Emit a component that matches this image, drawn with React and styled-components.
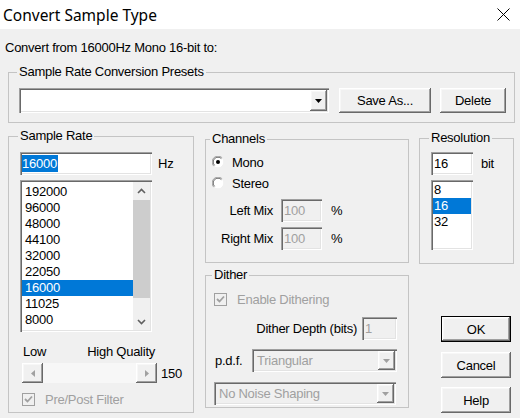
import styled, { createGlobalStyle } from "styled-components";

const GlobalStyle = createGlobalStyle`
  body {
    margin: 0;
    background: #f0f0f0;
  }
  * {
    box-sizing: border-box;
  }
`;

const sunken =
  "inset 1px 1px 0 #a0a0a0, inset 2px 2px 0 #696969, inset -1px -1px 0 #ffffff, inset -2px -2px 0 #e3e3e3";
const raised =
  "inset -1px -1px 0 #696969, inset 1px 1px 0 #ffffff, inset -2px -2px 0 #a0a0a0, inset 2px 2px 0 #f7f7f7";

const Window = styled.div`
  width: 520px;
  height: 418px;
  background: #f0f0f0;
  font-family: "Liberation Sans", Arial, sans-serif;
  font-size: 13px;
  letter-spacing: -0.25px;
  color: #000;
  overflow: hidden;
`;

const TitleBar = styled.div`
  height: 29px;
  background: #fff;
  display: flex;
  align-items: center;
  justify-content: space-between;
  padding: 0 10px 0 3px;
  font-family: "Noto Sans", "Open Sans", sans-serif;
  font-size: 15.5px;
  letter-spacing: 0;
`;

const Body = styled.div`
  padding: 12px 6px 0 8px;
`;

const Caption = styled.div`
  height: 14px;
  line-height: 14px;
  margin-left: -3px;
  margin-bottom: 10px;
`;

const Group = styled.fieldset`
  margin: 0;
  margin-top: ${(p) => p.$mt || 0}px;
  width: ${(p) => p.$w}px;
  height: ${(p) => p.$h}px;
  padding: ${(p) => p.$pad};
  border: 1px solid #c4c4c4;
  min-width: 0;
`;

const Legend = styled.legend`
  padding: 0 2px;
  margin-left: -2px;
  height: 14px;
  line-height: 14px;
`;

const Row = styled.div`
  display: flex;
  align-items: ${(p) => p.$align || "center"};
  justify-content: ${(p) => p.$justify || "flex-start"};
  margin-top: ${(p) => p.$mt || 0}px;
  margin-left: ${(p) => p.$ml || 0}px;
  height: ${(p) => (p.$h ? p.$h + "px" : "auto")};
  width: ${(p) => (p.$w ? p.$w + "px" : "auto")};
`;

const Column = styled.div`
  display: flex;
  flex-direction: column;
  margin-left: ${(p) => p.$ml || 0}px;
  margin-top: ${(p) => p.$mt || 0}px;
`;

const Field = styled.div`
  width: ${(p) => p.$w}px;
  height: 23px;
  margin-left: ${(p) => p.$ml || 0}px;
  background: ${(p) => (p.$disabled ? "#f0f0f0" : "#fff")};
  color: ${(p) => (p.$disabled ? "#a0a0a0" : "#000")};
  box-shadow: ${sunken};
  padding: 0 3px 0 ${(p) => p.$pl ?? 3}px;
  display: flex;
  align-items: center;
`;

const Selected = styled.span`
  background: #0078d7;
  color: #fff;
  line-height: 17px;
  padding: 0 1px 0 0;
`;

const Unit = styled.span`
  margin-left: ${(p) => p.$ml || 6}px;
`;

const Label = styled.span`
  width: ${(p) => (p.$w ? p.$w + "px" : "auto")};
  text-align: ${(p) => p.$align || "left"};
  color: ${(p) => (p.$disabled ? "#a0a0a0" : "#000")};
  margin-left: ${(p) => p.$ml || 0}px;
`;

const ListBox = styled.div`
  width: ${(p) => p.$w}px;
  height: ${(p) => p.$h}px;
  margin-top: ${(p) => p.$mt || 0}px;
  background: #fff;
  box-shadow: ${sunken};
  padding: 2px;
  display: flex;
  overflow: hidden;
`;

const Items = styled.div`
  flex: 1;
  overflow: hidden;
  padding-top: ${(p) => p.$pt || 0}px;
`;

const Item = styled.div`
  height: 16px;
  line-height: 16px;
  padding-left: ${(p) => p.$pl ?? 3}px;
  background: ${(p) => (p.$active ? "#0078d7" : "transparent")};
  color: ${(p) => (p.$active ? "#fff" : "#000")};
  white-space: nowrap;
`;

const VScroll = styled.div`
  width: 17px;
  display: flex;
  flex-direction: column;
  background: #f0f0f0;
`;

const ScrollArrow = styled.div`
  height: 17px;
  display: flex;
  align-items: center;
  justify-content: center;
  flex-shrink: 0;
`;

const Thumb = styled.div`
  height: 98px;
  margin: 1px 0 0;
  background: #cdcdcd;
  flex-shrink: 0;
`;

const ScrollTrack = styled.div`
  flex: 1;
`;

const Combo = styled.div`
  width: ${(p) => p.$w}px;
  height: ${(p) => p.$h || 23}px;
  margin-top: ${(p) => p.$mt || 0}px;
  background: ${(p) => (p.$disabled ? "#f0f0f0" : "#fff")};
  color: ${(p) => (p.$disabled ? "#a0a0a0" : "#000")};
  box-shadow: ${sunken};
  padding: 2px;
  display: flex;
`;

const ComboText = styled.div`
  flex: 1;
  padding-left: 3px;
  display: flex;
  align-items: center;
`;

const DropBtn = styled.div`
  width: 17px;
  background: #f0f0f0;
  box-shadow: ${raised};
  display: flex;
  align-items: center;
  justify-content: center;
`;

const Button = styled.button`
  width: ${(p) => p.$w}px;
  height: ${(p) => p.$h || 26}px;
  margin-left: ${(p) => p.$ml || 0}px;
  margin-top: ${(p) => p.$mt || 0}px;
  padding: 0;
  font: inherit;
  letter-spacing: inherit;
  color: #000;
  background: #f0f0f0;
  border: ${(p) => (p.$default ? "1px solid #000" : "none")};
  box-shadow: ${raised};
`;

const RadioRow = styled.div`
  height: 20px;
  display: flex;
  align-items: center;
  margin-top: ${(p) => p.$mt || 0}px;
  gap: 8px;
`;

const CheckRow = styled.div`
  height: 20px;
  display: flex;
  align-items: center;
  margin-top: ${(p) => p.$mt || 0}px;
  margin-left: ${(p) => p.$ml || 0}px;
  gap: 10px;
  color: #a0a0a0;
`;

const Track = styled.div`
  width: 135px;
  height: 20px;
  margin-left: 2px;
  display: flex;
  background: #f7f7f7;
`;

const TrackBtn = styled.div`
  width: 21px;
  background: #f0f0f0;
  box-shadow: ${raised};
  display: flex;
  align-items: center;
  justify-content: center;
`;

const TrackFill = styled.div`
  flex: 1;
`;

const MidColumn = styled.div`
  display: flex;
  flex-direction: column;
  margin-left: 11px;
`;

const Arrow = ({ dir = "down", color = "#000" }) => (
  <svg width="7" height="4" viewBox="0 0 7 4">
    {dir === "down" ? (
      <path d="M0 0 H7 L3.5 4 Z" fill={color} />
    ) : (
      <path d="M0 4 H7 L3.5 0 Z" fill={color} />
    )}
  </svg>
);

const Chevron = ({ up }) => (
  <svg width="9" height="6" viewBox="0 0 9 6">
    <path
      d={up ? "M1 5 L4.5 1.5 L8 5" : "M1 1 L4.5 4.5 L8 1"}
      fill="none"
      stroke="#606060"
      strokeWidth="1.6"
    />
  </svg>
);

const SideArrow = ({ left }) => (
  <svg width="4" height="7" viewBox="0 0 4 7">
    <path d={left ? "M4 0 V7 L0 3.5 Z" : "M0 0 V7 L4 3.5 Z"} fill="#a0a0a0" />
  </svg>
);

const CheckBox = () => (
  <svg width="13" height="13" viewBox="0 0 13 13">
    <rect x="0.5" y="0.5" width="12" height="12" fill="#f0f0f0" stroke="#a0a0a0" />
    <path d="M3 6 L5.5 8.5 L10 3.5" fill="none" stroke="#a0a0a0" strokeWidth="1.8" />
  </svg>
);

const Radio = ({ checked }) => (
  <svg width="12" height="12" viewBox="0 0 12 12">
    <circle cx="6" cy="6" r="5.5" fill="#fff" />
    <path d="M1.8 10.2 A5.5 5.5 0 0 1 10.2 1.8" fill="none" stroke="#a0a0a0" />
    <path d="M2.6 9.4 A4.5 4.5 0 0 1 9.4 2.6" fill="none" stroke="#696969" />
    <path d="M10.2 1.8 A5.5 5.5 0 0 1 1.8 10.2" fill="none" stroke="#f0f0f0" />
    {checked && <circle cx="6" cy="6" r="2" fill="#000" />}
  </svg>
);

const CloseIcon = () => (
  <svg width="13" height="13" viewBox="0 0 13 13">
    <path d="M0.5 0.5 L12.5 12.5 M12.5 0.5 L0.5 12.5" stroke="#000" strokeWidth="1" />
  </svg>
);

const rates = [
  "192000",
  "96000",
  "48000",
  "44100",
  "32000",
  "22050",
  "16000",
  "11025",
  "8000",
  "6000",
];

export default function App() {
  return (
    <Window>
      <GlobalStyle />
      <TitleBar>
        <span>Convert Sample Type</span>
        <CloseIcon />
      </TitleBar>
      <Body>
        <Caption>Convert from 16000Hz Mono 16-bit to:</Caption>

        <Group $w={507} $h={58} $pad="9px 8px 8px 10px">
          <Legend>Sample Rate Conversion Presets</Legend>
          <Row>
            <Combo $w={310} $h={25}>
              <ComboText />
              <DropBtn>
                <Arrow />
              </DropBtn>
            </Combo>
            <Button $w={92} $h={25} $ml={10}>
              Save As...
            </Button>
            <Button $w={66} $h={25} $ml={9}>
              Delete
            </Button>
          </Row>
        </Group>

        <Row $align="flex-start" $mt={6}>
          <Group $w={187} $h={284} $pad="9px 0 0 11px">
            <Legend>Sample Rate</Legend>
            <Row>
              <Field $w={132} $pl={2}>
                <Selected>16000</Selected>
              </Field>
              <Unit>Hz</Unit>
            </Row>
            <ListBox $w={132} $h={152} $mt={5}>
              <Items $pt={2}>
                {rates.map((r) => (
                  <Item key={r} $active={r === "16000"}>
                    {r}
                  </Item>
                ))}
              </Items>
              <VScroll>
                <ScrollArrow>
                  <Chevron up />
                </ScrollArrow>
                <Thumb />
                <ScrollTrack />
                <ScrollArrow>
                  <Chevron />
                </ScrollArrow>
              </VScroll>
            </ListBox>
            <Row $mt={12} $w={135} $justify="space-between" $h={14}>
              <Label $ml={3}>Low</Label>
              <Label>High Quality</Label>
            </Row>
            <Row $mt={5}>
              <Track>
                <TrackBtn>
                  <SideArrow left />
                </TrackBtn>
                <TrackFill />
                <TrackBtn>
                  <SideArrow />
                </TrackBtn>
              </Track>
              <Unit $ml={4}>150</Unit>
            </Row>
            <CheckRow $mt={6} $ml={2}>
              <CheckBox />
              <span>Pre/Post Filter</span>
            </CheckRow>
          </Group>

          <MidColumn>
            <Group $w={204} $h={131} $mt={3} $pad="6px 10px 0 6px">
              <Legend>Channels</Legend>
              <RadioRow>
                <Radio checked />
                <span>Mono</span>
              </RadioRow>
              <RadioRow $mt={1}>
                <Radio />
                <span>Stereo</span>
              </RadioRow>
              <Row $mt={6}>
                <Label $w={61} $align="right">
                  Left Mix
                </Label>
                <Field $w={41} $ml={8} $disabled>
                  100
                </Field>
                <Unit $ml={9}>%</Unit>
              </Row>
              <Row $mt={5}>
                <Label $w={61} $align="right">
                  Right Mix
                </Label>
                <Field $w={41} $ml={8} $disabled>
                  100
                </Field>
                <Unit $ml={9}>%</Unit>
              </Row>
            </Group>

            <Group $w={204} $h={140} $mt={5} $pad="7px 11px 0 8px">
              <Legend>Dither</Legend>
              <CheckRow>
                <CheckBox />
                <span>Enable Dithering</span>
              </CheckRow>
              <Row $mt={8} $justify="flex-end">
                <Label>Dither Depth (bits)</Label>
                <Field $w={35} $ml={5} $disabled>
                  1
                </Field>
              </Row>
              <Row $mt={9} $justify="space-between">
                <Label $ml={1}>p.d.f.</Label>
                <Combo $w={145} $disabled>
                  <ComboText>Triangular</ComboText>
                  <DropBtn>
                    <Arrow color="#a0a0a0" />
                  </DropBtn>
                </Combo>
              </Row>
              <Combo $w={182} $mt={10} $disabled>
                <ComboText>No Noise Shaping</ComboText>
                <DropBtn>
                  <Arrow color="#a0a0a0" />
                </DropBtn>
              </Combo>
            </Group>
          </MidColumn>

          <Column $ml={10}>
            <Group $w={95} $h={133} $mt={2} $pad="7px 0 0 11px">
              <Legend>Resolution</Legend>
              <Row>
                <Field $w={42}>16</Field>
                <Unit $ml={8}>bit</Unit>
              </Row>
              <ListBox $w={42} $h={70} $mt={5}>
                <Items>
                  {["8", "16", "32"].map((b) => (
                    <Item key={b} $pl={1} $active={b === "16"}>
                      {b}
                    </Item>
                  ))}
                </Items>
              </ListBox>
            </Group>
            <Column $ml={22} $mt={52}>
              <Button $w={70} $default>
                OK
              </Button>
              <Button $w={70} $mt={10}>
                Cancel
              </Button>
              <Button $w={70} $mt={9}>
                Help
              </Button>
            </Column>
          </Column>
        </Row>
      </Body>
    </Window>
  );
}
